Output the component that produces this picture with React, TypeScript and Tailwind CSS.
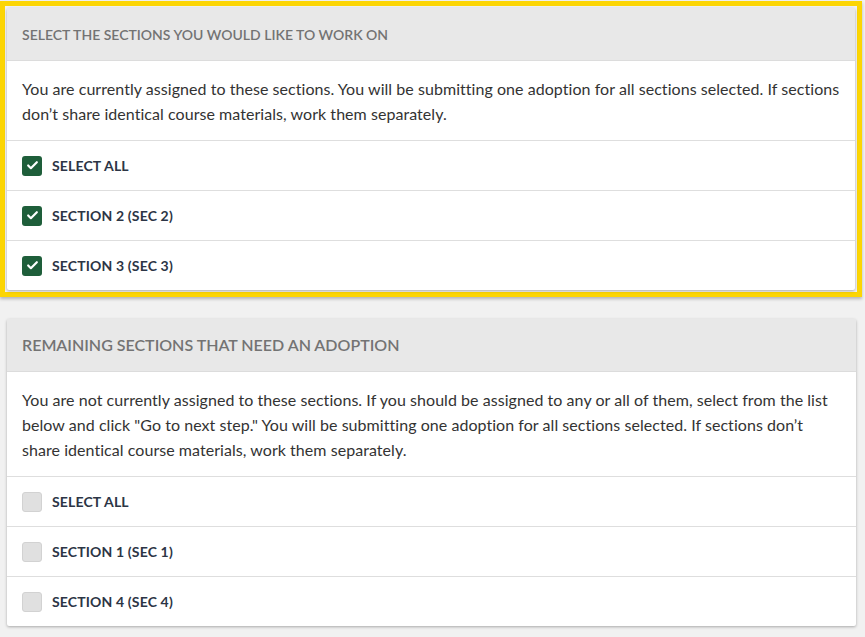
import { Check } from "lucide-react"

type Row = { label: string; checked: boolean }

const assigned: Row[] = [
  { label: "SELECT ALL", checked: true },
  { label: "SECTION 2 (SEC 2)", checked: true },
  { label: "SECTION 3 (SEC 3)", checked: true },
]

const remaining: Row[] = [
  { label: "SELECT ALL", checked: false },
  { label: "SECTION 1 (SEC 1)", checked: false },
  { label: "SECTION 4 (SEC 4)", checked: false },
]

function Box({ checked }: { checked: boolean }) {
  if (checked) {
    return (
      <span className="flex h-5 w-5 shrink-0 items-center justify-center rounded-[3px] bg-[#1e5e3a]">
        <Check className="h-[13px] w-[13px] text-white" strokeWidth={4} />
      </span>
    )
  }
  return <span className="h-5 w-5 shrink-0 rounded-[3px] border border-[#d2d2d2] bg-[#e0e0e0]" />
}

function SectionCard({
  title,
  titleSize,
  text,
  rows,
}: {
  title: string
  titleSize: string
  text: string
  rows: Row[]
}) {
  return (
    <div className="rounded-[2px] bg-white shadow-[0_1px_3px_rgba(0,0,0,0.3)]">
      <div className={`flex h-[52px] items-center bg-[#e8e8e8] px-[15px] font-semibold text-[#737373] ${titleSize}`}>
        {title}
      </div>
      <p className="border-t border-[#dcdcdc] px-[15px] pt-[15px] pb-[14px] text-[16px] leading-[25px] tracking-[0.05px] text-[#333]">
        {text}
      </p>
      {rows.map((r) => (
        <div key={r.label} className="flex h-[50px] items-center gap-[10px] border-t border-[#dedede] px-[15px]">
          <Box checked={r.checked} />
          <span className="text-[14px] font-bold tracking-[0.15px] text-[#2c3545]">{r.label}</span>
        </div>
      ))}
    </div>
  )
}

export default function App() {
  return (
    <div className="min-h-screen bg-[#f1f1f1] pt-[1px] pr-[3px] font-['Lato',sans-serif]">
      <div className="border-[5px] border-[#fcd503] p-[2px] shadow-[0_2px_3px_rgba(0,0,0,0.25)]">
        <SectionCard
          title="SELECT THE SECTIONS YOU WOULD LIKE TO WORK ON"
          titleSize="text-[14px]"
          text="You are currently assigned to these sections. You will be submitting one adoption for all sections selected. If sections don’t share identical course materials, work them separately."
          rows={assigned}
        />
      </div>
      <div className="mt-[22px] pl-[7px] pr-[6px]">
        <SectionCard
          title="REMAINING SECTIONS THAT NEED AN ADOPTION"
          titleSize="text-[16px]"
          text={'You are not currently assigned to these sections. If you should be assigned to any or all of them, select from the list below and click "Go to next step." You will be submitting one adoption for all sections selected. If sections don’t share identical course materials, work them separately.'}
          rows={remaining}
        />
      </div>
    </div>
  )
}
